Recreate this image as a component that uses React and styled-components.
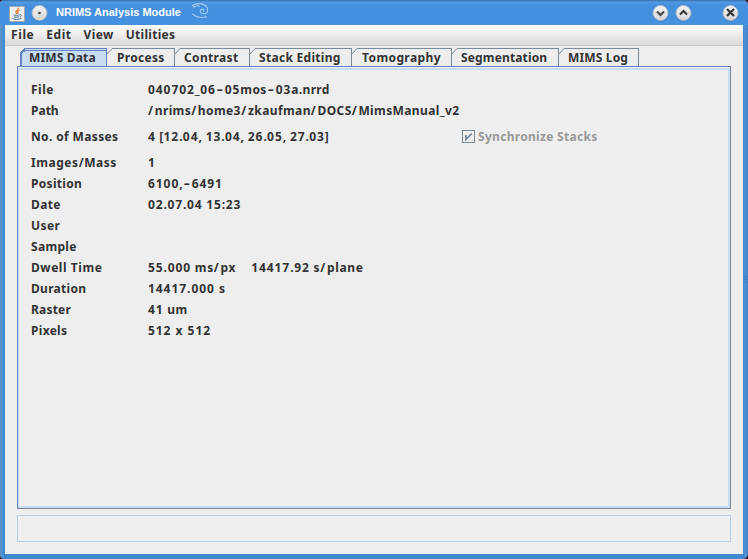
import React from "react";
import styled, { createGlobalStyle } from "styled-components";

const Global = createGlobalStyle`
  *, *::before, *::after { box-sizing: border-box; }
  body { margin: 0; background: #400008; overflow: hidden; }
`;

const Frame = styled.div`
  position: relative;
  display: flex;
  flex-direction: column;
  width: 748px;
  height: 559px;
  padding: 0 5px 5px;
  background: linear-gradient(90deg, #5992cb 0 2px, #3f89d1 4px 744px, #5594d5 746px, #377cc3 748px);
  border-radius: 4px 5px 5px 4px;
  font: bold 12px/16px "Noto Sans", sans-serif;
  color: #333;
`;

const Grip = styled.svg`
  position: absolute;
  right: 1px;
  top: 275px;
  width: 3px;
  height: 9px;
`;

const TitleBar = styled.header`
  display: flex;
  align-items: center;
  flex: 0 0 25px;
  margin: 0 -5px;
  padding: 0 9px 0 9px;
  border-radius: 4px 5px 0 0;
  background: linear-gradient(#3b7cba 0 1px, #549ce4 2px, #458fdd 5px, #4592e0 25px);
`;

const AppIcon = styled.svg`
  width: 16px;
  height: 16px;
  margin-top: 3px;
`;

const RoundButton = styled.svg`
  width: 17px;
  height: 18px;
  margin-top: 1px;
  margin-left: ${(p) => p.$gap}px;
`;

const Title = styled.h1`
  margin: -1px 0 0 8px;
  font: bold 11px/14px "Liberation Sans", sans-serif;
  color: #fff;
`;

const Swirl = styled.svg`
  width: 20px;
  height: 18px;
  margin: -3px auto 0 10px;
`;

const Client = styled.main`
  display: flex;
  flex-direction: column;
  flex: 1;
  background: #eee;
`;

const MenuBar = styled.nav`
  display: flex;
  flex: 0 0 21px;
  padding: 2px 0 0 6px;
  gap: 12px;
  background: linear-gradient(#fff, #dadada);
  border-bottom: 1px solid #ccc;
`;

const MenuItem = styled.span`
  letter-spacing: ${(p) => p.$tracking}px;
`;

const TabStrip = styled.div`
  display: flex;
  align-items: flex-end;
  height: 19px;
  margin: 2px 12px 0 15px;
`;

const TabBox = styled.div`
  display: flex;
  width: ${(p) => p.$width}px;
  height: 19px;
`;

const TabFace = styled.div`
  flex: 1;
  padding: 1px 0 0 ${(p) => p.$inset}px;
  border: solid #7a8a99;
  border-width: 1px 1px 0 0;
  letter-spacing: ${(p) => p.$tracking}px;
  white-space: nowrap;
`;

const ActiveFace = styled(TabFace)`
  background: #c8ddf2;
  border-color: #6382bf;
  box-shadow: inset 0 1px 0 #c8ddf2, inset 0 2px 0 #6382bf, inset 0 -1px 0 #6382bf;
`;

const Corner = styled.svg`
  flex: none;
  width: 5px;
  height: 19px;
`;

const Panel = styled.section`
  height: 443px;
  margin: -1px 12px 0;
  border: 1px solid #7a8a99;
  border-top-color: #6382bf;
  border-left-color: #6382bf;
`;

const PanelBody = styled.div`
  height: 440px;
  margin-top: 1px;
  padding: 9px 0 0 12px;
  border: solid #c8ddf2;
  border-width: 2px 2px 2px 1px;
`;

const Row = styled.div`
  display: flex;
  align-items: center;
  height: ${(p) => (p.$tall ? 31 : 21)}px;
`;

const Label = styled.span`
  flex: 0 0 117px;
  letter-spacing: ${(p) => p.$tracking}px;
  white-space: nowrap;
`;

const ValueCell = styled.span`
  flex: 0 0 314px;
  display: flex;
  gap: 15px;
  white-space: nowrap;
`;

const ValueText = styled.span`
  letter-spacing: ${(p) => p.$tracking}px;
  white-space: pre;
`;

const Digits = styled.span`
  letter-spacing: 0.94px;
`;

const Hyphen = styled.span`
  display: inline-block;
  width: 9px;
  padding-left: 1px;
  transform: scaleX(1.6);
  transform-origin: 1.5px 50%;
`;

const Slash = styled.span`
  letter-spacing: 1.7px;
`;

const Check = styled.label`
  display: flex;
  align-items: center;
  gap: 3px;
  letter-spacing: 0.3px;
  color: #999;
`;

const CheckBox = styled.svg`
  width: 13px;
  height: 13px;
`;

const StatusBox = styled.footer`
  height: 27px;
  margin: 6px 12px 0;
  border: 1px solid #b8cfe5;
`;

function Value({ text, tracking = 0.5 }) {
  return (
    <ValueText $tracking={tracking}>
      {text.split(/(\d+|-|\/)/).map((part, i) => {
        if (/^\d/.test(part)) return <Digits key={i}>{part}</Digits>;
        if (part === "-") return <Hyphen key={i}>-</Hyphen>;
        if (part === "/") return <Slash key={i}>/</Slash>;
        return part;
      })}
    </ValueText>
  );
}

const menus = [["File", 0.6], ["Edit", 0.5], ["View", 0.4], ["Utilities", 0.3]];

const tabs = [
  ["Process", 68, 5, 0.3],
  ["Contrast", 75, 4, 0.35],
  ["Stack Editing", 102, 4, 0.3],
  ["Tomography", 100, 5, 0.4],
  ["Segmentation", 107, 4, 0.15],
  ["MIMS Log", 80, 4, 0.15],
];

const rows = [
  ["File", 0.5, ["040702_06-05mos-03a.nrrd"], 0.35],
  ["Path", 0, ["/nrims/home3/zkaufman/DOCS/MimsManual_v2"], 0.39],
  ["No. of Masses", 0.36, ["4 [12.04, 13.04, 26.05, 27.03]"], 0.32],
  ["Images/Mass", 0.55, ["1"]],
  ["Position", 0.3, ["6100,-6491"], 0],
  ["Date", 0.35, ["02.07.04 15:23"]],
  ["User", 0.4, []],
  ["Sample", 0.3, []],
  ["Dwell Time", 0.55, ["55.000 ms/px", "14417.92 s/plane"], 0.65],
  ["Duration", 0.3, ["14417.000 s"], 1],
  ["Raster", 0.2, ["41 um"]],
  ["Pixels", 0.3, ["512 x 512"], 1],
];

function WindowButton({ gap, children }) {
  return (
    <RoundButton $gap={gap} viewBox="0 0 17 18">
      <defs>
        <linearGradient id="knob" x1="0" y1="0" x2="0" y2="1">
          <stop offset="0" stopColor="#f4f4f4" />
          <stop offset="1" stopColor="#d2d4d6" />
        </linearGradient>
      </defs>
      <circle cx="8.5" cy="9.7" r="7.8" fill="#2f6da9" opacity=".6" />
      <circle cx="8.5" cy="9" r="7.5" fill="url(#knob)" stroke="#b3bcc5" strokeWidth=".8" />
      {children}
    </RoundButton>
  );
}

export default function App() {
  return (
    <>
      <Global />
      <Frame>
        <TitleBar>
          <AppIcon viewBox="0 0 16 16">
            <rect x=".5" y=".5" width="15" height="15" rx="1" fill="#eceef0" stroke="#a8abad" />
            <path d="M9.3 1.8C10 4 6 4.6 7 6.8L7.8 8M10.6 4.4C8 5.4 8.4 6.4 9 7.8" fill="none" stroke="#e8762c" strokeWidth="1.3" />
            <path d="M4.5 8.8C6 9.6 9 9.4 10.6 8.8M5 10.8C7 11.4 9 11.2 10.2 10.7M10.8 8.8C13 8.3 12.8 10.5 10.9 11M3.4 12.4C5 13.8 10 13.8 12.5 12.3" fill="none" stroke="#4f7696" strokeWidth="1" />
          </AppIcon>
          <WindowButton gap={6}>
            <circle cx="8.5" cy="9" r="1.3" fill="#444" />
          </WindowButton>
          <Title>NRIMS Analysis Module</Title>
          <Swirl viewBox="0 0 20 18" fill="none" stroke="#a3c9ee" strokeWidth="1.1">
            <path d="M1 4C4 1 10 1 13.5 3C18 5.5 17.5 11.5 13 11.8C9 12 8 8 10.8 7.2C13 6.8 13.5 9 12 9.2" />
            <path d="M2 5.5C5 3.5 8 3.8 9 4.5M1.5 12C5 15.5 12 16.5 16 14.5" />
          </Swirl>
          <WindowButton gap={0}>
            <path d="M5 7.5L8.5 11L12 7.5" fill="none" stroke="#444" strokeWidth="2" />
          </WindowButton>
          <WindowButton gap={6}>
            <path d="M5 10.5L8.5 7L12 10.5" fill="none" stroke="#333" strokeWidth="2" />
          </WindowButton>
          <WindowButton gap={30}>
            <path d="M5 5L12 12M12 5L5 12" fill="none" stroke="#333" strokeWidth="2.2" />
          </WindowButton>
        </TitleBar>
        <Client>
          <MenuBar>
            {menus.map(([name, tracking]) => (
              <MenuItem key={name} $tracking={tracking}>{name}</MenuItem>
            ))}
          </MenuBar>
          <TabStrip>
            <TabBox $width={87}>
              <Corner viewBox="0 0 5 19" shapeRendering="crispEdges">
                <path d="M1 19V5L5 1V19Z" fill="#c8ddf2" />
                <path d="M0.5 19V5L5 .5" fill="none" stroke="#6382bf" />
                <path d="M1.5 19V5.5L5 2.5M2 18.5H5" fill="none" stroke="#6382bf" />
              </Corner>
              <ActiveFace $inset={4} $tracking={0.15}>MIMS Data</ActiveFace>
            </TabBox>
            {tabs.map(([name, width, inset, tracking]) => (
              <TabBox key={name} $width={width}>
                <Corner viewBox="0 0 5 19">
                  <path d="M0 6L5 .5" fill="none" stroke="#7a8a99" />
                </Corner>
                <TabFace $inset={inset} $tracking={tracking}>{name}</TabFace>
              </TabBox>
            ))}
          </TabStrip>
          <Panel>
            <PanelBody>
              {rows.map(([label, labelTracking, values, tracking], i) => (
                <Row key={label} $tall={i === 2}>
                  <Label $tracking={labelTracking}>{label}</Label>
                  <ValueCell>
                    {values.map((v) => (
                      <Value key={v} text={v} tracking={tracking} />
                    ))}
                  </ValueCell>
                  {i === 2 && (
                    <Check>
                      <CheckBox viewBox="0 0 13 13">
                        <rect x=".5" y=".5" width="12" height="12" fill="#eee" stroke="#7a8a99" />
                        <path d="M4 5V9.3L9.7 3.6" fill="none" stroke="#7a8a99" strokeWidth="1.8" />
                      </CheckBox>
                      Synchronize Stacks
                    </Check>
                  )}
                </Row>
              ))}
            </PanelBody>
          </Panel>
          <StatusBox />
        </Client>
        <Grip viewBox="0 0 3 9" fill="#2d659f">
          <circle cx="1.5" cy="1.5" r=".8" />
          <circle cx="1.5" cy="4.5" r=".8" />
          <circle cx="1.5" cy="7.5" r=".8" />
        </Grip>
      </Frame>
    </>
  );
}
